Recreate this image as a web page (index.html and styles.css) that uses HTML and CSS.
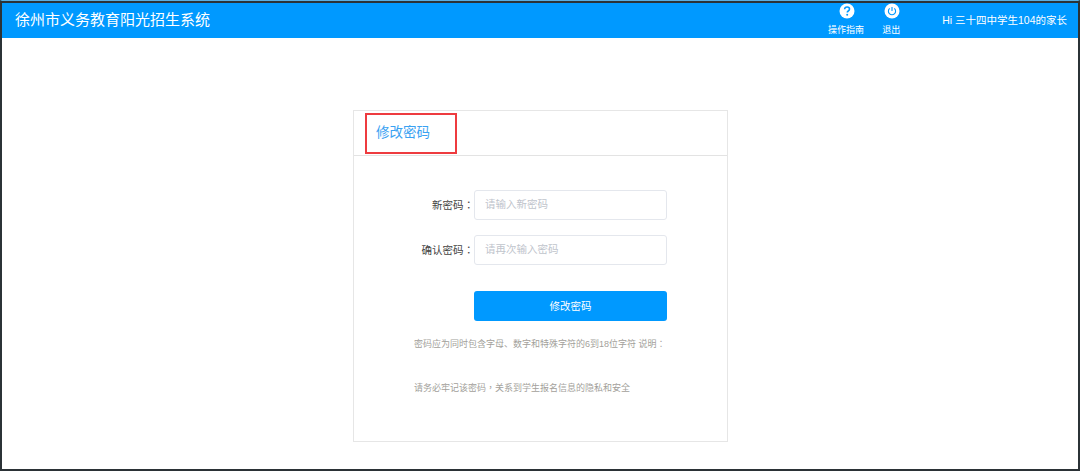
FILE: index.html
```html
<!DOCTYPE html>
<html lang="zh-CN">
<head>
<meta charset="utf-8">
<title>修改密码</title>
<link rel="stylesheet" href="styles.css">
</head>
<body>
<div class="frame">
  <header class="topbar">
    <h1 class="brand">徐州市义务教育阳光招生系统</h1>
    <nav class="tools">
      <a class="tool tool-guide">
        <svg class="tool-icon" viewBox="0 0 16 16"><circle cx="8" cy="8" r="7.5" fill="#fff"/><path d="M5.6 6.2C5.7 4.8 6.7 4 8.1 4c1.4 0 2.4.8 2.4 2 0 1-.6 1.5-1.3 2-.6.4-.9.7-.9 1.5" fill="none" stroke="#0099ff" stroke-width="1.6"/><circle cx="8.2" cy="11.7" r="1" fill="#0099ff"/></svg>
        <span>操作指南</span>
      </a>
      <a class="tool tool-exit">
        <svg class="tool-icon" viewBox="0 0 16 16"><circle cx="8" cy="8" r="7.5" fill="#fff"/><path d="M5.7 5.4a3.6 3.6 0 1 0 4.6 0" fill="none" stroke="#0099ff" stroke-width="1.1"/><path d="M8 4v4" stroke="#0099ff" stroke-width="1.1"/></svg>
        <span>退出</span>
      </a>
      <span class="greeting">Hi 三十四中学生104的家长</span>
    </nav>
  </header>
  <main class="content">
    <section class="card">
      <div class="card-head">
        <h2 class="card-title">修改密码</h2>
        <div class="highlight"></div>
      </div>
      <form class="form">
        <label class="row">
          <span class="row-label">新密码<span class="punct" lang="zh-TW">：</span></span>
          <input class="field" type="password" placeholder="请输入新密码">
        </label>
        <label class="row">
          <span class="row-label">确认密码<span class="punct" lang="zh-TW">：</span></span>
          <input class="field" type="password" placeholder="请再次输入密码">
        </label>
        <div class="row row-submit">
          <span class="row-label"></span>
          <button class="submit" type="button">修改密码</button>
        </div>
        <p class="note note-first">密码应为同时包含字母、数字和特殊字符的6到18位字符 说明<span class="punct" lang="zh-TW">：</span></p>
        <p class="note note-second">请务必牢记该密码<span class="punct" lang="zh-TW">，</span>关系到学生报名信息的隐私和安全</p>
      </form>
    </section>
  </main>
</div>
</body>
</html>
```
FILE: styles.css
```css
* { box-sizing: border-box; }
html, body { margin: 0; padding: 0; height: 100%; }
body {
  background: #fff;
  font-family: "Liberation Sans", "Noto Sans CJK SC", sans-serif;
  overflow: hidden;
}
.frame {
  width: 1080px;
  height: 471px;
  display: flex;
  flex-direction: column;
  border-style: solid;
  border-color: #5aaee2 #2b3236 #2b3236 #2b3236;
  border-width: 1px 2px 2px 2px;
  background: #fff;
}
.topbar {
  height: 37px;
  flex: none;
  background: #0099ff;
  border-top: 2px solid #2b3236;
  display: flex;
  align-items: stretch;
  justify-content: space-between;
  color: #fff;
  padding: 0 0 0 13px;
}
.brand {
  margin: 0;
  font-size: 15px;
  font-weight: 400;
  line-height: 33px;
}
.tools { display: flex; align-items: flex-start; }
.tool {
  display: flex;
  flex-direction: column;
  align-items: center;
  font-size: 9px;
  line-height: 12px;
}
.tool-icon { width: 16px; height: 16px; display: block; margin: 0 0 5px 2px; }
.tool-exit { margin-left: 18px; }
.greeting {
  margin-left: 42px;
  margin-right: 11px;
  font-size: 10.5px;
  line-height: 34px;
}
.content {
  flex: 1;
  display: flex;
  justify-content: center;
  padding: 72px 0 0 1px;
}
.card {
  width: 375px;
  height: 332px;
  border: 1px solid #e6e6e6;
}
.card-head {
  position: relative;
  height: 45px;
  border-bottom: 1px solid #e3e3e3;
  padding-left: 22px;
}
.card-title {
  margin: 0;
  font-size: 13.5px;
  font-weight: 400;
  line-height: 44px;
  color: #3aa2f2;
}
.highlight {
  position: absolute;
  left: 11px;
  top: 2px;
  width: 92px;
  height: 41px;
  border: 2px solid #ee3b3f;
}
.form { display: flex; flex-direction: column; padding-top: 34px; }
.row { display: flex; align-items: center; height: 30px; margin-bottom: 15px; }
.row-label {
  width: 120px;
  flex: none;
  text-align: right;
  font-size: 10.5px;
  line-height: 12px;
  padding-bottom: 1px;
  color: #444;
}
.punct { font-family: "Noto Sans CJK TC", sans-serif; }
.field {
  width: 193px;
  height: 30px;
  border: 1px solid #e4e7ed;
  border-radius: 3px;
  padding: 0 10px 2px 10px;
  font-family: inherit;
  font-size: 10.5px;
  background: #fff;
  outline: none;
}
.field::placeholder { color: #c0c4cc; opacity: 1; }
.row-submit { margin-top: 11px; margin-bottom: 0; }
.submit {
  width: 193px;
  height: 30px;
  border: none;
  border-radius: 3px;
  background: #0099ff;
  color: #fff;
  font-family: inherit;
  font-size: 10.5px;
  padding: 0 0 2px;
}
.note {
  margin: 0;
  padding-left: 60px;
  font-size: 9px;
  line-height: 12px;
  color: #a39f9b;
}
.note-first { margin-top: 17px; }
.note-second { margin-top: 32px; }
```
